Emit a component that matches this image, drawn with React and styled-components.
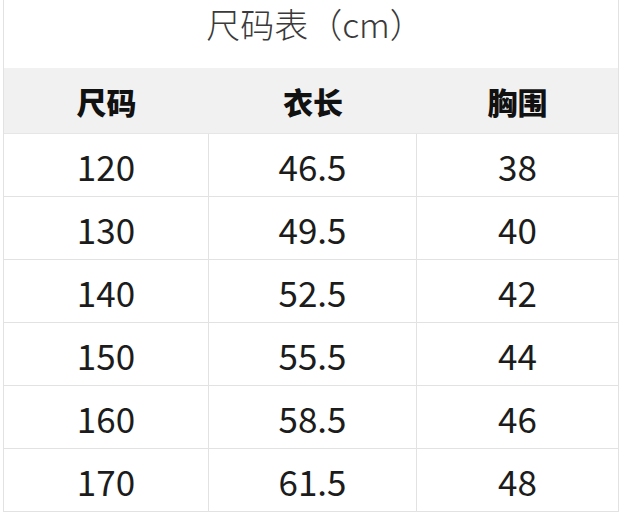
import React from 'react';
import styled, { createGlobalStyle } from 'styled-components';

const rows = [
	['120', '46.5', '38'],
	['130', '49.5', '40'],
	['140', '52.5', '42'],
	['150', '55.5', '44'],
	['160', '58.5', '46'],
	['170', '61.5', '48'],
];

const GlobalStyle = createGlobalStyle`
	* {
		box-sizing: border-box;
	}
	body {
		margin: 0;
		background: #fff;
		font-family: 'Noto Sans CJK SC', 'Noto Sans', sans-serif;
	}
`;

const App = () => {
	return (
		<>
			<GlobalStyle />
			<Page>
				<Table>
					<Title>尺码表（cm）</Title>
					<HeadRow>
						<HeadCell>尺码</HeadCell>
						<HeadCell>衣长</HeadCell>
						<HeadCell>胸围</HeadCell>
					</HeadRow>
					{rows.map(row => (
						<Row key={row[0]}>
							{row.map((val, i) => (
								<Cell key={i} $last={i === 2}>
									{val}
								</Cell>
							))}
						</Row>
					))}
				</Table>
			</Page>
		</>
	);
};

export default App;

const Page = styled.div`
	width: 625px;
	height: 518px;
	padding-left: 3px;
	overflow: hidden;
`;

const Table = styled.div`
	width: 616px;
	border-left: 1px solid #e2e2e2;
	border-right: 1px solid #e2e2e2;
`;

const Title = styled.div`
	height: 68px;
	padding-top: 2px;
	padding-left: 8px;
	text-align: center;
	font-size: 34px;
	font-weight: 300;
	color: #3a3a3a;
	line-height: 44px;
`;

const HeadRow = styled.div`
	display: grid;
	grid-template-columns: 205px 208px 1fr;
	height: 66px;
	background: #f1f1f1;
	border-bottom: 1px solid #e6e6e6;
`;

const HeadCell = styled.div`
	display: flex;
	align-items: center;
	justify-content: center;
	font-size: 30px;
	font-weight: 900;
	color: #111;
`;

const Row = styled.div`
	display: grid;
	grid-template-columns: 205px 208px 1fr;
	height: 63px;
	border-bottom: 1px solid #e2e2e2;
`;

const Cell = styled.div`
	display: flex;
	align-items: center;
	justify-content: center;
	font-size: 35px;
	color: #1c1c1c;
	border-right: ${({ $last }) => ($last ? 'none' : '1px solid #e2e2e2')};
`;
